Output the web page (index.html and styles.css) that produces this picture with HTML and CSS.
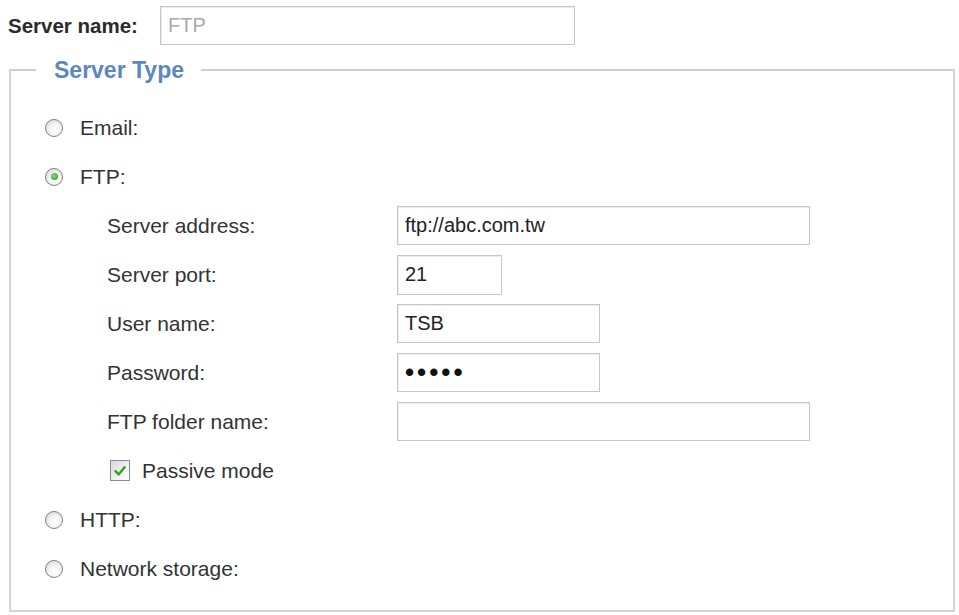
FILE: index.html
```html
<!DOCTYPE html>
<html>
<head>
<meta charset="utf-8">
<link rel="stylesheet" href="styles.css">
</head>
<body>
<div class="name-row">
  <span class="name-label">Server name:</span>
  <input class="field field-name" type="text" value="FTP">
</div>
<fieldset class="server-type">
  <legend class="legend">Server Type</legend>
  <div class="row radio-row">
    <span class="radio"></span><span class="label">Email:</span>
  </div>
  <div class="row radio-row">
    <span class="radio checked"></span><span class="label">FTP:</span>
  </div>
  <div class="sub">
    <div class="row sub-row">
      <span class="sub-label">Server address:</span>
      <input class="field w-long" type="text" value="ftp://abc.com.tw">
    </div>
    <div class="row sub-row">
      <span class="sub-label">Server port:</span>
      <input class="field w-short" type="text" value="21">
    </div>
    <div class="row sub-row">
      <span class="sub-label">User name:</span>
      <input class="field w-mid" type="text" value="TSB">
    </div>
    <div class="row sub-row">
      <span class="sub-label">Password:</span>
      <input class="field w-mid pass" type="text" value="•••••">
    </div>
    <div class="row sub-row">
      <span class="sub-label">FTP folder name:</span>
      <input class="field w-long" type="text" value="">
    </div>
    <div class="row check-row">
      <span class="checkbox">
        <svg width="14" height="14" viewBox="0 0 14 14"><path d="M2.5 7.2 L5.6 10.4 L11.6 3.2" fill="none" stroke="#3a9a2e" stroke-width="2.4" stroke-linecap="round" stroke-linejoin="round"/></svg>
      </span>
      <span class="label">Passive mode</span>
    </div>
  </div>
  <div class="row radio-row">
    <span class="radio"></span><span class="label">HTTP:</span>
  </div>
  <div class="row radio-row">
    <span class="radio"></span><span class="label">Network storage:</span>
  </div>
</fieldset>
</body>
</html>
```
FILE: styles.css
```css
html, body {
  margin: 0;
  padding: 0;
  background: #ffffff;
}
body {
  font-family: "Liberation Sans", Arial, sans-serif;
  color: #333333;
  width: 959px;
  height: 615px;
  overflow: hidden;
}
.name-row {
  display: flex;
  align-items: center;
  height: 51px;
  padding-left: 8px;
}
.name-label {
  font-weight: bold;
  font-size: 20.5px;
  color: #2b2b2b;
  width: 152px;
}
.field {
  box-sizing: border-box;
  height: 39px;
  border: 1px solid #c6c6c6;
  box-shadow: inset 1px 1px 0 #ececec;
  background: #fff;
  font-family: "Liberation Sans", Arial, sans-serif;
  font-size: 20px;
  color: #222;
  padding: 0 7px;
  margin: 0;
  outline: none;
}
.field-name {
  width: 415px;
  color: #a9a9a9;
}
.server-type {
  margin: 6px 4px 0 9px;
  padding: 20px 0 16px 0;
  border: 2px solid #d6d6d6;
  border-top-color: #cfcfcf;
  height: 555px;
  box-sizing: border-box;
  min-width: 0;
}
.legend {
  margin-left: 25px;
  padding: 0 17px 0 18px;
  font-size: 23px;
  line-height: 26px;
  font-weight: bold;
  color: #5b87c2;
}
.row {
  display: flex;
  align-items: center;
  height: 49px;
}
.radio-row {
  padding-left: 34px;
}
.label {
  font-size: 21px;
  color: #333;
}
.radio {
  box-sizing: border-box;
  width: 18px;
  height: 18px;
  border-radius: 50%;
  border: 1.5px solid #808080;
  background: radial-gradient(circle at 60% 65%, #ffffff 0%, #f3f3f3 45%, #d0d0d0 100%);
  margin-right: 17px;
  display: flex;
  align-items: center;
  justify-content: center;
}
.radio.checked::after {
  content: "";
  width: 7px;
  height: 7px;
  border-radius: 50%;
  background: radial-gradient(circle at 40% 40%, #8be07a 0%, #3fb043 60%, #2b8f31 100%);
}
.sub {
  padding-left: 96px;
}
.sub-label {
  font-size: 21px;
  color: #333;
  width: 290px;
}
.w-long { width: 413px; }
.w-short { width: 105px; height: 40px; }
.w-mid { width: 203px; }
.pass {
  font-size: 26px;
  font-weight: bold;
  letter-spacing: 3px;
  color: #111;
  padding-left: 7px;
}
.check-row {
  padding-left: 3px;
}
.checkbox {
  box-sizing: border-box;
  width: 20px;
  height: 21px;
  border: 1.5px solid #7f8ea3;
  background: linear-gradient(135deg, #d9d9d9 0%, #f2f2f2 60%, #ffffff 100%);
  margin-right: 12px;
  display: flex;
  align-items: center;
  justify-content: center;
}
```
